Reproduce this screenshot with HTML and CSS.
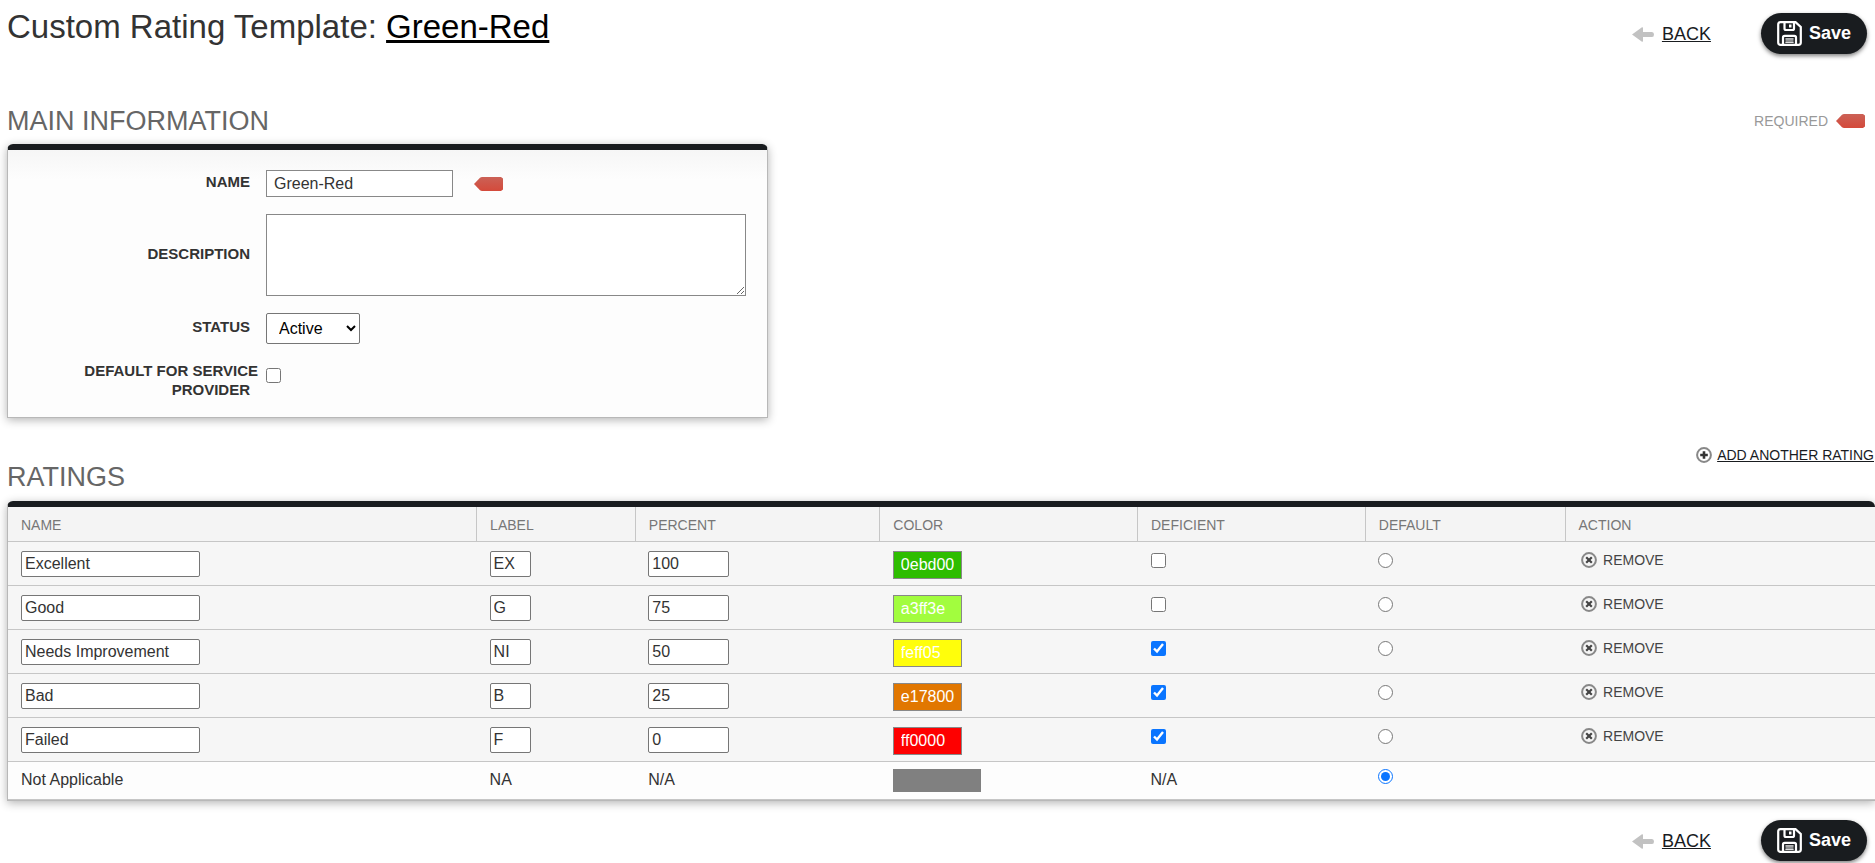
FILE: index.html
```html
<!DOCTYPE html>
<html lang="en">
  <head>
    <meta charset="UTF-8" />
    <title>Custom Rating Template</title>
    <meta name="viewport" content="width=device-width, initial-scale=1.0" />
    <link rel="stylesheet" href="styles.css">
  </head>
  <body>
    <!-- shared icons -->
    <svg class="sprite" aria-hidden="true">
      <symbol id="icon-arrow" viewBox="0 0 22 15">
        <path d="M0 7.5 L10 0.3 Q11 0 11 1 V5 H20 Q22 5 22 7.5 Q22 10 20 10 H11 V14 Q11 15 10 14.7 Z" fill="#c2c2c2" />
      </symbol>
      <symbol id="icon-save" viewBox="0 0 25 25">
        <path d="M3.5 1.2 H18.5 L23.8 6 V21.5 Q23.8 23.8 21.5 23.8 H3.5 Q1.2 23.8 1.2 21.5 V3.5 Q1.2 1.2 3.5 1.2 Z" fill="none" stroke="#fff" stroke-width="2.2" />
        <path d="M7.5 1.5 V7.5 Q7.5 9 9 9 H15.5 Q17 9 17 7.5 V1.5" fill="none" stroke="#fff" stroke-width="2.2" />
        <rect x="12" y="3.5" width="2.5" height="3" fill="#fff" />
        <path d="M6 23.5 V16.5 Q6 14.8 7.7 14.8 H17.3 Q19 14.8 19 16.5 V23.5" fill="none" stroke="#fff" stroke-width="2.2" />
        <rect x="8.5" y="17.5" width="8" height="4.5" fill="#8c8e8f" />
        <path d="M8.5 17.8 H16.5 M8.5 21.5 H16.5" stroke="#ddd" stroke-width="1" />
      </symbol>
      <symbol id="icon-add" viewBox="0 0 16 16">
        <circle cx="8" cy="8" r="6.9" fill="#fff" stroke="#888" stroke-width="2" />
        <path d="M8 4.2 V11.8 M4.2 8 H11.8" stroke="#333" stroke-width="2.6" />
      </symbol>
      <symbol id="icon-remove" viewBox="0 0 16 16">
        <circle cx="8" cy="8" r="6.9" fill="#f6f6f6" stroke="#888" stroke-width="2" />
        <path d="M5.2 5.2 L10.8 10.8 M10.8 5.2 L5.2 10.8" stroke="#444" stroke-width="2.2" />
      </symbol>
      <symbol id="icon-required" viewBox="0 0 29 14">
        <linearGradient id="red" x1="0" y1="0" x2="0" y2="1">
          <stop offset="0" stop-color="#cb6156" />
          <stop offset="1" stop-color="#d44a3b" />
        </linearGradient>
        <path d="M0 7 L6 0.8 Q7 0 8 0 H27 L29 1.5 V12.5 L27 14 H8 Q7 14 6 13.2 Z" fill="url(#red)" />
      </symbol>
    </svg>

    <header class="page-header">
      <h1>Custom Rating Template: <a href="#">Green-Red</a></h1>
      <div class="actions">
        <a class="back" href="#"><svg width="22" height="15"><use href="#icon-arrow" /></svg><span>BACK</span></a>
        <button class="save" type="submit" form="template"><svg width="25" height="25"><use href="#icon-save" /></svg>Save</button>
      </div>
    </header>

    <form id="template">
      <div class="section-header">
        <h2>MAIN INFORMATION</h2>
        <div class="required">REQUIRED <svg width="29" height="14"><use href="#icon-required" /></svg></div>
      </div>

      <div class="panel main-info">
        <div class="label-cell"><label for="name">NAME</label></div>
        <div class="field">
          <input class="text" type="text" id="name" value="Green-Red" />
          <svg width="29" height="14"><use href="#icon-required" /></svg>
        </div>
        <div class="label-cell"><label for="description">DESCRIPTION</label></div>
        <div class="field"><textarea id="description"></textarea></div>
        <div class="label-cell"><label for="status">STATUS</label></div>
        <div class="field">
          <select id="status">
            <option>Active</option>
            <option>Inactive</option>
          </select>
        </div>
        <div class="label-cell"><label for="default">DEFAULT FOR SERVICE PROVIDER</label></div>
        <div class="field check"><input type="checkbox" id="default" /></div>
      </div>

      <div class="section-header ratings-header">
        <h2>RATINGS</h2>
        <a class="add" href="#"><svg width="16" height="16"><use href="#icon-add" /></svg><span>ADD ANOTHER RATING</span></a>
      </div>

      <div class="panel ratings">
        <table>
          <colgroup>
            <col class="col-name" />
            <col class="col-label" />
            <col class="col-percent" />
            <col class="col-color" />
            <col class="col-deficient" />
            <col class="col-default" />
            <col />
          </colgroup>
          <thead>
            <tr>
              <th>NAME</th>
              <th>LABEL</th>
              <th>PERCENT</th>
              <th>COLOR</th>
              <th>DEFICIENT</th>
              <th>DEFAULT</th>
              <th>ACTION</th>
            </tr>
          </thead>
          <tbody>
            <tr>
              <td><input class="name" type="text" aria-label="Name" value="Excellent" /></td>
              <td><input class="short" type="text" aria-label="Label" value="EX" /></td>
              <td><input class="percent" type="text" aria-label="Percent" value="100" /></td>
              <td><input class="color green" type="text" aria-label="Color" value="0ebd00" /></td>
              <td><input type="checkbox" aria-label="Deficient" /></td>
              <td><input type="radio" name="default" aria-label="Default" /></td>
              <td><a class="remove" href="#"><svg width="16" height="16"><use href="#icon-remove" /></svg>REMOVE</a></td>
            </tr>
            <tr>
              <td><input class="name" type="text" aria-label="Name" value="Good" /></td>
              <td><input class="short" type="text" aria-label="Label" value="G" /></td>
              <td><input class="percent" type="text" aria-label="Percent" value="75" /></td>
              <td><input class="color lime" type="text" aria-label="Color" value="a3ff3e" /></td>
              <td><input type="checkbox" aria-label="Deficient" /></td>
              <td><input type="radio" name="default" aria-label="Default" /></td>
              <td><a class="remove" href="#"><svg width="16" height="16"><use href="#icon-remove" /></svg>REMOVE</a></td>
            </tr>
            <tr>
              <td><input class="name" type="text" aria-label="Name" value="Needs Improvement" /></td>
              <td><input class="short" type="text" aria-label="Label" value="NI" /></td>
              <td><input class="percent" type="text" aria-label="Percent" value="50" /></td>
              <td><input class="color yellow" type="text" aria-label="Color" value="feff05" /></td>
              <td><input type="checkbox" aria-label="Deficient" checked /></td>
              <td><input type="radio" name="default" aria-label="Default" /></td>
              <td><a class="remove" href="#"><svg width="16" height="16"><use href="#icon-remove" /></svg>REMOVE</a></td>
            </tr>
            <tr>
              <td><input class="name" type="text" aria-label="Name" value="Bad" /></td>
              <td><input class="short" type="text" aria-label="Label" value="B" /></td>
              <td><input class="percent" type="text" aria-label="Percent" value="25" /></td>
              <td><input class="color orange" type="text" aria-label="Color" value="e17800" /></td>
              <td><input type="checkbox" aria-label="Deficient" checked /></td>
              <td><input type="radio" name="default" aria-label="Default" /></td>
              <td><a class="remove" href="#"><svg width="16" height="16"><use href="#icon-remove" /></svg>REMOVE</a></td>
            </tr>
            <tr>
              <td><input class="name" type="text" aria-label="Name" value="Failed" /></td>
              <td><input class="short" type="text" aria-label="Label" value="F" /></td>
              <td><input class="percent" type="text" aria-label="Percent" value="0" /></td>
              <td><input class="color red" type="text" aria-label="Color" value="ff0000" /></td>
              <td><input type="checkbox" aria-label="Deficient" checked /></td>
              <td><input type="radio" name="default" aria-label="Default" /></td>
              <td><a class="remove" href="#"><svg width="16" height="16"><use href="#icon-remove" /></svg>REMOVE</a></td>
            </tr>
            <tr class="na">
              <td>Not Applicable</td>
              <td>NA</td>
              <td>N/A</td>
              <td><div class="swatch"></div></td>
              <td>N/A</td>
              <td><input type="radio" name="default" aria-label="Default" checked /></td>
              <td></td>
            </tr>
          </tbody>
        </table>
      </div>
    </form>

    <footer class="page-footer">
      <div class="actions">
        <a class="back" href="#"><svg width="22" height="15"><use href="#icon-arrow" /></svg><span>BACK</span></a>
        <button class="save" type="submit" form="template"><svg width="25" height="25"><use href="#icon-save" /></svg>Save</button>
      </div>
    </footer>
  </body>
</html>
```

FILE: styles.css
```css
:root {
  --dark: #191c1f;
  --text: #333;
  --line: #c6c6c6;
}

* {
  box-sizing: border-box;
}

body {
  margin: 0;
  padding-left: 7px;
  background: #fff;
  color: var(--text);
  font-family: "Liberation Sans", Arial, sans-serif;
  font-size: 16px;
}

svg {
  display: block;
  flex: none;
}

.sprite {
  position: absolute;
  width: 0;
  height: 0;
}

h1,
h2 {
  margin: 0;
  font-weight: normal;
}

h1 {
  font-size: 33px;
  line-height: 38px;
}

h1 a {
  color: #000;
}

h2 {
  color: #666;
  font-size: 27px;
  line-height: 32px;
}

input,
select,
textarea {
  margin: 0;
  font-family: inherit;
  font-size: 16px;
}

/* Header and footer */
.page-header {
  display: flex;
  justify-content: space-between;
  align-items: flex-start;
  height: 105px;
  padding: 8px 8px 0 0;
}

.actions {
  display: flex;
  align-items: center;
  gap: 50px;
  padding-top: 5px;
}

.back {
  display: flex;
  align-items: center;
  gap: 8px;
  padding-top: 2px;
  color: var(--dark);
  font-size: 18px;
  text-decoration: none;
}

.back span,
.add span {
  text-decoration: underline;
}

.save {
  display: flex;
  align-items: center;
  gap: 7px;
  height: 41px;
  padding: 0 16px;
  border: none;
  border-radius: 21px;
  background: var(--dark);
  box-shadow: 0 2px 4px rgba(0, 0, 0, 0.5);
  color: #fff;
  font-family: inherit;
  font-size: 18px;
  font-weight: bold;
  cursor: pointer;
}

.page-footer {
  display: flex;
  justify-content: flex-end;
  padding: 14px 8px 4px 0;
}

/* Sections */
.section-header {
  display: flex;
  justify-content: space-between;
  align-items: center;
}

.required {
  display: flex;
  align-items: center;
  gap: 8px;
  padding-right: 10px;
  color: #999;
  font-size: 14px;
}

.panel {
  border: 1px solid #b8b8b8;
  border-top: 6px solid var(--dark);
  border-radius: 6px 6px 0 0;
  box-shadow: 0 2px 10px rgba(0, 0, 0, 0.3);
}

.main-info {
  display: grid;
  grid-template-columns: 250px 1fr;
  gap: 17px 8px;
  width: 761px;
  margin-top: 7px;
  padding: 20px 21px 14px 0;
  background: linear-gradient(#f6f6f6, #fdfdfd 30px);
}

.label-cell {
  align-self: center;
  padding: 0 0 4px 55px;
  font-size: 15px;
  font-weight: bold;
  line-height: 19px;
  text-align: right;
}

.label-cell label {
  padding-right: 8px;
}

.field {
  display: flex;
  align-items: center;
}

.field.check {
  align-items: flex-start;
  padding-top: 7px;
}

.field .text {
  width: 187px;
  height: 27px;
  margin-right: 21px;
  padding: 0 7px;
  border: 1px solid #888;
  color: var(--text);
}

textarea {
  width: 100%;
  height: 82px;
  padding: 4px 7px;
  border: 1px solid #888;
}

select {
  width: 94px;
  height: 31px;
  padding-left: 8px;
  border: 1px solid #767676;
  border-radius: 2px;
  background: #fff;
  color: #000;
}

input[type="checkbox"],
input[type="radio"] {
  display: block;
  width: 15px;
  height: 15px;
  accent-color: #0a75ff;
}

.ratings-header {
  align-items: flex-start;
  margin-top: 29px;
}

.ratings-header h2 {
  padding-top: 14px;
}

.add {
  display: flex;
  align-items: center;
  gap: 5px;
  padding-right: 1px;
  color: var(--dark);
  font-size: 14px;
  text-decoration: none;
}

/* Ratings table */
.ratings {
  margin-top: 8px;
  border-right: none;
  background: #f6f6f6;
}

table {
  width: 100%;
  border-collapse: collapse;
  table-layout: fixed;
}

.col-name {
  width: 25.1%;
}

.col-label {
  width: 8.5%;
}

.col-percent {
  width: 13.1%;
}

.col-color {
  width: 13.8%;
}

.col-deficient {
  width: 12.2%;
}

.col-default {
  width: 10.7%;
}

th {
  height: 34px;
  padding: 2px 13px 0;
  border-right: 1px solid var(--line);
  border-bottom: 1px solid var(--line);
  background: #f4f4f4;
  color: #777;
  font-size: 14px;
  font-weight: normal;
  text-align: left;
}

th:last-child {
  border-right: none;
}

td {
  height: 44px;
  padding: 9px 13px 0;
  border-bottom: 1px solid var(--line);
  vertical-align: top;
}

td input[type="text"] {
  display: block;
  height: 26px;
  padding: 0 3px;
  border: 1px solid #767676;
  border-radius: 2px;
  color: var(--text);
}

td .name {
  width: 179px;
}

td .short {
  width: 41px;
}

td .percent {
  width: 81px;
}

td input.color {
  width: 69px;
  height: 28px;
  padding: 0 7px;
  border-color: #888;
  border-radius: 0;
  color: #fff;
}

.green {
  background: #2ebd00;
}

.lime {
  background: #a2fd3e;
}

.yellow {
  background: #fffe0b;
}

.orange {
  background: #e17700;
}

.red {
  background: #fe0000;
}

td input[type="checkbox"],
td input[type="radio"] {
  margin-top: 2px;
}

.remove {
  display: flex;
  align-items: center;
  gap: 6px;
  padding: 1px 0 0 3px;
  color: #444;
  font-size: 14px;
  text-decoration: none;
}

.na td {
  height: 38px;
  padding-top: 7px;
  background: #fdfdfd;
  line-height: 22px;
}

.na td input[type="radio"] {
  margin-top: 0;
}

.swatch {
  width: 88px;
  height: 23px;
  background: #808080;
}
```
